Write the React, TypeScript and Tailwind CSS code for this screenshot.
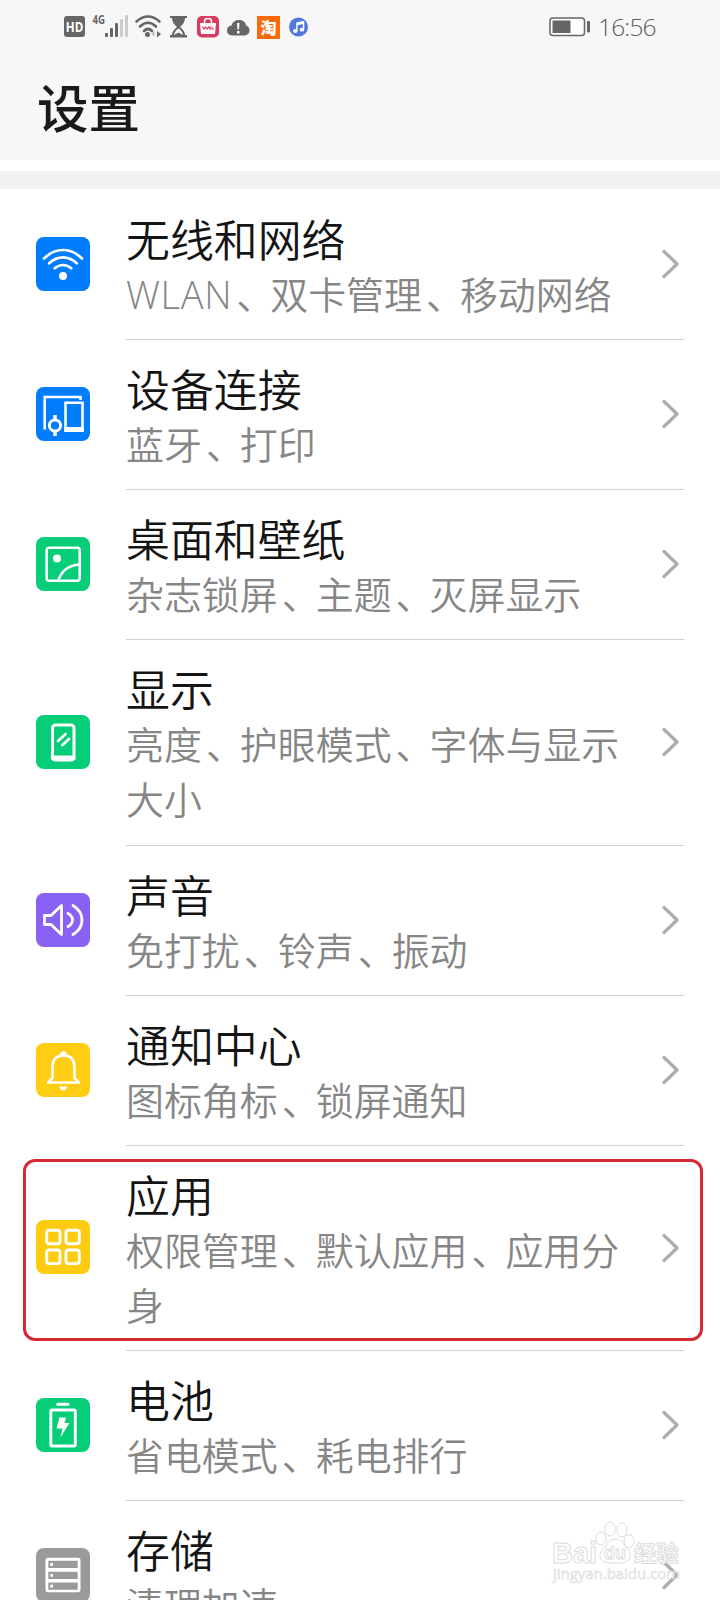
import type { ReactNode } from 'react';

const stroke = { fill: 'none', stroke: '#fff', strokeLinecap: 'round', strokeLinejoin: 'round' } as const;

type Item = {
  title: string;
  sub: string;
  color: string;
  height: string;
  icon: ReactNode;
  highlighted?: boolean;
};

const items: Item[] = [
  {
    title: '无线和网络',
    sub: 'WLAN、双卡管理、移动网络',
    color: 'bg-[#007dff]',
    height: 'h-[150px]',
    icon: (
      <g {...stroke} strokeWidth="2.7">
        <path d="M8 21.5Q16.500 13 27 13T46 21.500" />
        <path d="M13.200 26.300Q19.500 20.400 27 20.400T40.800 26.300" />
        <path d="M18.700 31.200Q22.500 28 27 28T35.300 31.200" />
        <circle cx="27" cy="39" r="4" fill="#fff" stroke="none" />
      </g>
    ),
  },
  {
    title: '设备连接',
    sub: '蓝牙、打印',
    color: 'bg-[#007dff]',
    height: 'h-[150px]',
    icon: (
      <g {...stroke} strokeWidth="2.6" strokeLinecap="butt" strokeLinejoin="miter">
        <path d="M8.700 42.500V10H44.500V13" />
        <path d="M29.500 15.800H46.500V43.500H29.500Z" />
        <path d="M28.200 42.500H47.800" strokeWidth="5" />
        <circle cx="19" cy="38.500" r="5.600" strokeWidth="3" />
        <path d="M19 28V33M19 44V49" strokeWidth="3.500" />
      </g>
    ),
  },
  {
    title: '桌面和壁纸',
    sub: '杂志锁屏、主题、灭屏显示',
    color: 'bg-[#06ce78]',
    height: 'h-[150px]',
    icon: (
      <g {...stroke} strokeWidth="2.6">
        <rect x="10.700" y="10.700" width="33" height="33" rx="2.500" />
        <circle cx="21" cy="21.500" r="4" fill="#fff" stroke="none" />
        <path d="M22.500 43Q27 29 43.500 27.500" />
      </g>
    ),
  },
  {
    title: '显示',
    sub: '亮度、护眼模式、字体与显示大小',
    color: 'bg-[#06ce78]',
    height: 'h-[206px]',
    icon: (
      <g {...stroke} strokeWidth="3">
        <rect x="16.500" y="10" width="21.500" height="35" rx="3" />
        <path d="M17.500 43H37" strokeWidth="5" />
        <path d="M22 26L29.500 19M26.500 30L33 24" strokeWidth="2.800" />
      </g>
    ),
  },
  {
    title: '声音',
    sub: '免打扰、铃声、振动',
    color: 'bg-[#8a61f5]',
    height: 'h-[150px]',
    icon: (
      <g {...stroke} strokeWidth="2.8">
        <path d="M8.500 22.500H15L25.500 12.500V41.500L15 31.500H8.500Z" />
        <path d="M32 20.500Q36.500 23 36.500 27T32 33.500" />
        <path d="M37 12.500Q46 18 46 27T37 41.500" />
      </g>
    ),
  },
  {
    title: '通知中心',
    sub: '图标角标、锁屏通知',
    color: 'bg-[#ffcd14]',
    height: 'h-[150px]',
    icon: (
      <g {...stroke} strokeWidth="2.6">
        <path d="M12 39.500H43M13 38.500L16.500 35V24Q16.500 12.500 27.500 12.500T38.500 24V35L42 38.500" />
        <path d="M24 12Q24.500 8 27.500 8T31 12Z" fill="#fff" stroke="none" />
        <path d="M23.300 43.500H31.300Q30.500 47.500 27.300 47.500T23.300 43.500Z" fill="#fff" stroke="none" />
      </g>
    ),
  },
  {
    title: '应用',
    sub: '权限管理、默认应用、应用分身',
    color: 'bg-[#fdcb10]',
    height: 'h-[205px]',
    highlighted: true,
    icon: (
      <g {...stroke} strokeWidth="2.9">
        <rect x="10.700" y="10.200" width="13.300" height="13.600" rx="2.500" />
        <rect x="30" y="10.200" width="13.300" height="13.600" rx="2.500" />
        <rect x="10.700" y="30" width="13.300" height="13.600" rx="2.500" />
        <rect x="30" y="30" width="13.300" height="13.600" rx="2.500" />
      </g>
    ),
  },
  {
    title: '电池',
    sub: '省电模式、耗电排行',
    color: 'bg-[#06ce78]',
    height: 'h-[150px]',
    icon: (
      <g {...stroke} strokeWidth="3">
        <rect x="14.800" y="12" width="24.500" height="36" rx="1.500" />
        <path d="M21.800 6.200H32" />
        <path
          d="M23.500 19.500H30L28.500 25H33.500L24.500 39.500L26.500 30.500H20.500Z"
          fill="#fff"
          stroke="none"
        />
      </g>
    ),
  },
  {
    title: '存储',
    sub: '清理加速',
    color: 'bg-[#9a9a9a]',
    height: 'h-[150px]',
    icon: (
      <g>
        <rect x="9.500" y="9.700" width="35" height="34.500" rx="2.500" fill="#fff" />
        <path d="M12.300 12.700H41.700V20H12.300ZM12.300 23.700H41.700V31H12.300ZM12.300 34.400H41.700V41.700H12.300Z" fill="#9a9a9a" />
        <path d="M14.300 15H17V17.700H14.300ZM14.300 26H17V28.700H14.300ZM14.300 36.700H17V39.400H14.300Z" fill="#fff" />
      </g>
    ),
  },
];

function Subtitle({ text }: { text: string }) {
  return (
    <>
      {text.split(/(、|[A-Z]+)/).map((part, i) => {
        if (part === '、') {
          return (
            <span key={i} className="pl-[4px] pr-[15px] [font-feature-settings:'halt']">
              {part}
            </span>
          );
        }
        if (/^[A-Z]+$/.test(part)) {
          return (
            <span key={i} className="font-light tracking-[0.700px]">
              {part}
            </span>
          );
        }
        return part;
      })}
    </>
  );
}

function Row({ item }: { item: Item }) {
  return (
    <div className={`relative flex shrink-0 items-stretch pl-9 pr-9 ${item.height}`}>
      <div className={`flex items-center ${item.highlighted ? 'pb-[3px]' : 'pb-[2px]'}`}>
        <div className={`size-[54px] overflow-hidden rounded-lg ${item.color}`}>
          <svg viewBox="0 0 54 54" className="size-[54px]">
            {item.icon}
          </svg>
        </div>
      </div>
      <div className="ml-9 flex flex-1 border-b border-[#cfcfcf]">
        <div className="w-[500px] shrink-0 pt-[23px]">
          <div className="text-[43.900px] font-[350] leading-[54px] text-[#141414]">{item.title}</div>
          <div className="text-[37.950px] font-[350] leading-[55px] text-[#868686]">
            <Subtitle text={item.sub} />
          </div>
        </div>
        <div className="flex flex-1 items-center justify-end pb-px pr-1">
          <svg viewBox="0 0 20 32" className="h-8 w-5" fill="none" stroke="#adadad" strokeWidth="3.3" strokeLinecap="round" strokeLinejoin="round">
            <path d="M4 3.500L17 16L4 28.500" />
          </svg>
        </div>
      </div>
      {item.highlighted && (
        <div className="absolute left-[23px] right-[17px] top-[13px] h-[182px] rounded-[12px] border-[3px] border-[#d52a36]" />
      )}
    </div>
  );
}

function StatusBar() {
  return (
    <div className="flex h-[53px] items-center pl-[63px] pr-[64px] pt-px">
      <svg viewBox="0 0 250 40" className="h-10 w-[250px]">
        <rect x="1" y="9" width="21" height="21" rx="3" fill="#666" />
        <text x="11.500" y="25" textAnchor="middle" fontSize="14" fontWeight="700" fill="#fff" textLength="17.500" lengthAdjust="spacingAndGlyphs">
          HD
        </text>
        <text x="29.500" y="17" fontSize="13" fontWeight="700" fill="#666" textLength="12.500" lengthAdjust="spacingAndGlyphs">
          4G
        </text>
        <g fill="#666">
          <rect x="42" y="26" width="3" height="4" rx="1" />
          <rect x="47" y="21" width="3" height="9" rx="1" />
          <rect x="52" y="16" width="3" height="14" rx="1" />
        </g>
        <g fill="#ccc">
          <rect x="57" y="12" width="3" height="18" rx="1" />
          <rect x="62" y="8" width="3" height="22" rx="1" />
        </g>
        <g fill="none" stroke="#666" strokeWidth="2.600" strokeLinecap="round">
          <path d="M73.500 14.500Q85 4.500 96.500 14.500" />
          <path d="M77 19.500Q85 12 93 19.500" />
          <path d="M81 24Q85 20 89 24" />
          <circle cx="84.500" cy="27.500" r="1.200" fill="#666" />
        </g>
        <path d="M94 24L98 27L94 30.500Z" fill="#666" />
        <path d="M91.500 24L88.500 27L91.500 30Z" fill="#bbb" />
        <path d="M107 9H124V11H122Q122 16 117 20Q122 24 122 28H124V30.500H107V28H109Q109 24 114 20Q109 16 109 11H107Z" fill="#666" />
        <path d="M115.500 21.500Q119.500 24 120 28L115.500 25.500L111 28Q111.500 24 115.500 21.500Z" fill="#f7f7f7" />
        <rect x="134" y="9" width="22" height="21.500" rx="5" fill="#d93a60" />
        <path d="M137 16H153L152 27H138Z" fill="#fff" />
        <path d="M141.500 17V14.500Q141.500 11.500 145 11.500T148.500 14.500V17" fill="none" stroke="#fff" strokeWidth="1.500" />
        <path d="M139.500 19.500L141 22L142.500 20L144 22L145.500 20L147 22V19.500M149 19.500V22H151" fill="none" stroke="#d93a60" strokeWidth="1.100" />
        <path d="M170 28.500Q164 28.500 164 23.500Q164 19 168.500 18.500Q170 13 176 13T183 18.500Q186.500 19.500 186.500 23.500T182 28.500Z" fill="#666" />
        <path d="M174 16H176.500L176 22.500H174.500ZM174 24H176.500V26.500H174Z" fill="#fff" />
        <rect x="194" y="9" width="23" height="23" fill="#f86a0c" />
        <text x="205.500" y="26.500" textAnchor="middle" fontSize="16" fontWeight="900" fill="#fff">
          淘
        </text>
        <circle cx="235.500" cy="20" r="9.500" fill="#4f77dc" />
        <g fill="#fff">
          <ellipse cx="232.300" cy="24" rx="2.300" ry="1.900" />
          <ellipse cx="239" cy="22.700" rx="2.300" ry="1.900" />
          <path d="M233.200 24V15.500L241.300 13.700V22.500H239.800V17L234.600 18.200V24Z" />
        </g>
      </svg>
      <div className="flex-1" />
      <svg viewBox="0 0 42 20" className="h-5 w-[42px]">
        <rect x="1" y="1" width="34.500" height="17.500" rx="3" fill="#fff" stroke="#666" strokeWidth="1.500" />
        <rect x="3.500" y="3.500" width="18" height="12.500" fill="#666" />
        <rect x="38" y="4" width="3" height="11.500" rx="1" fill="#666" />
      </svg>
      <div className="ml-[7px] w-[58px] whitespace-nowrap pb-px font-['Open_Sans'] text-[24.500px] font-light leading-[30px] tracking-[-0.800px] text-[#5c5c5c]">
        16:56
      </div>
    </div>
  );
}

function Watermark() {
  return (
    <svg viewBox="0 0 132 66" className="absolute left-[550px] top-[1520px] h-[66px] w-[132px]" fill="#fff" stroke="#dcdcdc" strokeWidth="1">
      <text x="2" y="43" fontSize="30" fontWeight="700" textLength="45" lengthAdjust="spacingAndGlyphs" className="font-['Liberation_Sans']">
        Bai
      </text>
      <ellipse cx="51" cy="18.500" rx="5" ry="6.500" />
      <ellipse cx="60" cy="9" rx="5" ry="7" />
      <ellipse cx="72" cy="10" rx="5" ry="7" />
      <ellipse cx="79" cy="21" rx="5" ry="6.500" />
      <path d="M65 19Q72 19 75 26Q82 31 80 38Q77 44 65 43Q52 44 50 37Q49 31 56 26Q59 19 65 19Z" />
      <text x="54" y="39" fontSize="19" fontWeight="700" textLength="22" lengthAdjust="spacingAndGlyphs" className="font-['Liberation_Sans']">
        du
      </text>
      <text x="84" y="41" fontSize="22" fontWeight="700" textLength="45" lengthAdjust="spacingAndGlyphs">
        经验
      </text>
      <text x="3" y="59" fontSize="15" textLength="127" lengthAdjust="spacingAndGlyphs" fill="#fafafa" stroke="#dcdcdc" strokeWidth="0.600" className="font-['Open_Sans']">
        jingyan.baidu.com
      </text>
    </svg>
  );
}

export default function App() {
  return (
    <div className="relative flex h-[1600px] w-[720px] flex-col overflow-hidden bg-white font-['Open_Sans','Noto_Sans_CJK_SC',sans-serif]">
      <header className="h-[160px] shrink-0 bg-[#f7f7f7]">
        <StatusBar />
        <h1 className="pl-[37px] pt-[16px] text-[51.500px] font-medium leading-[78px] text-[#1a1a1a]">设置</h1>
      </header>
      <div className="mt-[11px] h-[18px] shrink-0 bg-[#f1f1f1]" />
      <main className="flex flex-col pt-px">
        {items.map((item) => (
          <Row key={item.title} item={item} />
        ))}
      </main>
      <Watermark />
    </div>
  );
}
